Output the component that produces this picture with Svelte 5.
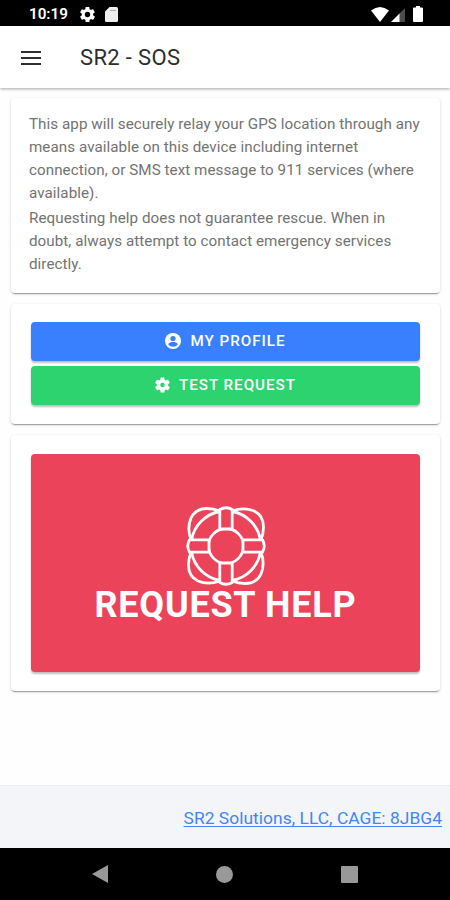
<script lang="ts">
  const title = "SR2 - SOS";
  const intro = [
    "This app will securely relay your GPS location through any means available on this device including internet connection, or SMS text message to 911 services (where available).",
    "Requesting help does not guarantee rescue. When in doubt, always attempt to contact emergency services directly."
  ];

  // one corner of the life ring rope, repeated by rotation
  const quarters = [0, 90, 180, 270];
</script>

<div class="screen">
  <div class="status-bar">
    <span class="clock">10:19</span>
    <svg class="status-gear" viewBox="2 2 20 20" aria-hidden="true">
      <path fill="#fff" d="M19.4 13c0-.3.1-.6.1-1s0-.7-.1-1l2.100-1.600c.2-.2.200-.4.100-.6l-2-3.500c-.1-.2-.4-.3-.6-.2l-2.500 1c-.5-.4-1.100-.7-1.700-1l-.4-2.600c0-.3-.2-.5-.4-.5h-4c-.3 0-.5.2-.5.4l-.4 2.700c-.6.300-1.200.6-1.700 1l-2.500-1c-.2-.1-.5 0-.6.2l-2 3.500c-.1.200-.1.5.1.600L4.500 11c0 .3-.1.600-.1 1s0 .7.100 1l-2.100 1.600c-.2.200-.2.400-.1.600l2 3.500c.1.200.4.300.6.200l2.500-1c.5.4 1.100.7 1.700 1l.4 2.600c0 .3.200.5.5.5h4c.3 0 .5-.2.5-.4l.4-2.700c.6-.3 1.200-.6 1.700-1l2.500 1c.2.100.5 0 .6-.2l2-3.500c.1-.2.100-.5-.1-.6zM12 15.600a3.600 3.600 0 1 1 0-7.200 3.600 3.600 0 0 1 0 7.200z" />
    </svg>
    <svg class="sd" viewBox="0 0 13 15" aria-hidden="true">
      <path fill="#eee" d="M4.500 0H11.500Q13 0 13 1.500V13.500Q13 15 11.500 15H1.500Q0 15 0 13.500V4.500z" />
      <path stroke="#aaa" stroke-width="1" d="M5 3.500H11" />
    </svg>
    <div class="signals">
      <svg width="18" height="15" viewBox="0 0 18 15" aria-hidden="true">
        <path fill="#fff" d="M0 3.600Q9-3.400 18 3.600L9 15z" />
      </svg>
      <svg width="14" height="14" viewBox="0 0 14 14" aria-hidden="true">
        <path fill="#4b4b4b" d="M14 0V14H8V6z" />
        <path fill="#fff" d="M0 14L8.500 5.500V14z" />
      </svg>
      <svg class="battery" width="10" height="16" viewBox="0 0 10 16" aria-hidden="true">
        <path fill="#fff" d="M3 0H7V1.500H9Q10 1.500 10 2.500V15Q10 16 9 16H1Q0 16 0 15V2.500Q0 1.500 1 1.500H3z" />
      </svg>
    </div>
  </div>

  <header class="toolbar">
    <button type="button" class="menu-btn" aria-label="Menu">
      <span></span>
      <span></span>
      <span></span>
    </button>
    <h1>{title}</h1>
  </header>

  <main>
    <section class="card intro">
      {#each intro as paragraph}
        <p>{paragraph}</p>
      {/each}
    </section>

    <section class="card actions">
      <button type="button" class="btn primary">
        <svg width="16" height="16" viewBox="0 0 16 16" aria-hidden="true">
          <circle cx="8" cy="8" r="8" fill="#fff" />
          <circle cx="8" cy="5.500" r="2.600" fill="#3880ff" />
          <path fill="#3880ff" d="M3.100 11.300C4.100 9.400 6 9 8 9s3.900.4 4.900 2.300A6 6 0 0 1 8 13.800a6 6 0 0 1-4.900-2.500z" />
        </svg>
        My Profile
      </button>
      <button type="button" class="btn success">
        <svg width="15" height="16" viewBox="2 2 20 20" aria-hidden="true">
          <path fill="#fff" d="M19.400 13c0-.3.1-.6.1-1s0-.7-.1-1l2.100-1.600c.2-.2.200-.4.100-.6l-2-3.500c-.1-.2-.4-.3-.6-.2l-2.500 1c-.5-.4-1.100-.7-1.700-1l-.4-2.600c0-.3-.2-.5-.4-.5h-4c-.3 0-.5.2-.5.4l-.4 2.700c-.6.300-1.200.6-1.700 1l-2.500-1c-.2-.1-.5 0-.6.2l-2 3.500c-.1.200-.1.5.1.600L4.500 11c0 .3-.1.600-.1 1s0 .7.100 1l-2.100 1.600c-.2.200-.2.400-.1.600l2 3.500c.1.200.4.300.6.200l2.500-1c.5.4 1.100.7 1.700 1l.4 2.600c0 .3.200.5.5.5h4c.3 0 .5-.2.5-.4l.4-2.700c.6-.3 1.200-.6 1.700-1l2.500 1c.2.100.5 0 .6-.2l2-3.500c.1-.2.100-.5-.1-.6zM12 15a3 3 0 1 1 0-6 3 3 0 0 1 0 6z" />
        </svg>
        Test Request
      </button>
    </section>

    <section class="card help">
      <button type="button" class="help-btn">
        <svg width="80" height="80" viewBox="-40 -40 80 80" fill="none" stroke="#fff" stroke-width="2.800" stroke-linejoin="round" aria-hidden="true">
          <circle r="17.500" />
          {#each quarters as angle}
            <g transform="rotate({angle})">
              <path d="M-34.500 -6A35 35 0 0 1 -6 -34.500" />
              <path d="M-35 -6C-37.500 -13 -38 -21 -35 -28C-32 -34.500 -26 -37.500 -19 -37.500C-14 -37.500 -10 -36.500 -6 -35" />
              <path fill="#eb445a" d="M-6.200 -36.500Q0 -40 6.200 -36.500V-17H-6.200z" />
            </g>
          {/each}
        </svg>
        <span>Request Help</span>
      </button>
    </section>
  </main>

  <footer>
    <a href="#top">SR2 Solutions, LLC, CAGE: 8JBG4</a>
  </footer>

  <nav class="system-nav" aria-label="System">
    <svg width="16" height="18" viewBox="0 0 16 18"><path fill="#999" d="M0 9L16 0V18z" /></svg>
    <svg width="17" height="17" viewBox="0 0 17 17"><circle cx="8.500" cy="8.500" r="8.500" fill="#999" /></svg>
    <svg width="17" height="17" viewBox="0 0 17 17"><rect width="17" height="17" rx="1" fill="#999" /></svg>
  </nav>
</div>

<style>
:global(body) {
  margin: 0;
}

.screen {
  width: 450px;
  height: 900px;
  display: flex;
  flex-direction: column;
  overflow: hidden;
  background: #fefefe;
  font-family: Roboto, "Liberation Sans", sans-serif;
}

svg {
  display: block;
  flex-shrink: 0;
}

button {
  border: 0;
  font: inherit;
  color: #fff;
}

.status-bar {
  height: 26px;
  flex-shrink: 0;
  display: flex;
  align-items: center;
  padding: 2px 27px 0 29px;
  box-sizing: border-box;
  background: #000;
  color: #fff;
}

.clock {
  width: 39px;
  font-size: 15.2px;
  font-weight: 600;
}

.status-gear {
  width: 15px;
  height: 15px;
  margin-left: 12px;
}

.sd {
  width: 13px;
  height: 15px;
  margin-left: 10px;
}

.signals {
  display: flex;
  align-items: flex-end;
  gap: 2px;
  margin-left: auto;
}

.battery {
  margin-left: 6px;
}

.toolbar {
  height: 62px;
  flex-shrink: 0;
  display: flex;
  align-items: center;
  padding-left: 21px;
  background: #fff;
  box-shadow: 0 1px 3px rgba(0, 0, 0, 0.35);
}

.menu-btn {
  width: 20px;
  padding: 1px 0 0;
  display: flex;
  flex-direction: column;
  gap: 4px;
  background: none;
}

.menu-btn span {
  height: 2px;
  background: #303030;
}

h1 {
  margin: 0 0 0 39px;
  font-size: 22px;
  font-weight: 400;
  letter-spacing: 0.35px;
  color: #2d2d2d;
}

main {
  flex: 1;
  display: flex;
  flex-direction: column;
  gap: 11px;
  padding: 10px 10px 0 11px;
}

.card {
  box-sizing: border-box;
  border-radius: 4px;
  background: #fff;
  box-shadow: 0 2px 1px -1px rgba(0, 0, 0, 0.3), 0 1px 3px rgba(0, 0, 0, 0.18);
}

.intro {
  height: 195px;
  padding: 15px 18px 14px;
}

.intro p {
  margin: 0 0 2px;
  font-size: 15.2px;
  line-height: 23px;
  letter-spacing: 0.055px;
  color: #737373;
}

.actions {
  height: 120px;
  padding: 18px 20px;
  display: flex;
  flex-direction: column;
  gap: 5px;
}

.btn {
  height: 39px;
  padding: 0 6px 2px;
  display: flex;
  align-items: center;
  justify-content: center;
  gap: 9px;
  border-radius: 4px;
  font-size: 15.2px;
  font-weight: 500;
  letter-spacing: 0.98px;
  text-transform: uppercase;
  box-shadow: 0 2px 2px rgba(0, 0, 0, 0.25);
}

.primary {
  background: #3880ff;
}

.success {
  background: #2dd36f;
}

.help {
  height: 256px;
  padding: 19px 20px;
}

.help-btn {
  width: 100%;
  height: 218px;
  padding: 3px 0 0;
  display: flex;
  flex-direction: column;
  align-items: center;
  justify-content: center;
  border-radius: 4px;
  background: #eb445a;
  box-shadow: 0 2px 2px rgba(0, 0, 0, 0.25);
}

.help-btn span {
  font-size: 36px;
  line-height: 38px;
  font-weight: 700;
  letter-spacing: 0.75px;
  text-transform: uppercase;
}

footer {
  height: 63px;
  flex-shrink: 0;
  box-sizing: border-box;
  display: flex;
  align-items: center;
  justify-content: flex-end;
  padding: 2px 8px 0 0;
  border-top: 1px solid #eceef0;
  background: #f4f5f8;
}

footer a {
  color: #4385f5;
  font-size: 17.4px;
  letter-spacing: 0.04px;
  text-underline-offset: 2px;
}

.system-nav {
  height: 52px;
  flex-shrink: 0;
  display: flex;
  align-items: center;
  justify-content: space-between;
  padding: 0 92px;
  box-sizing: border-box;
  background: #000;
}
</style>
